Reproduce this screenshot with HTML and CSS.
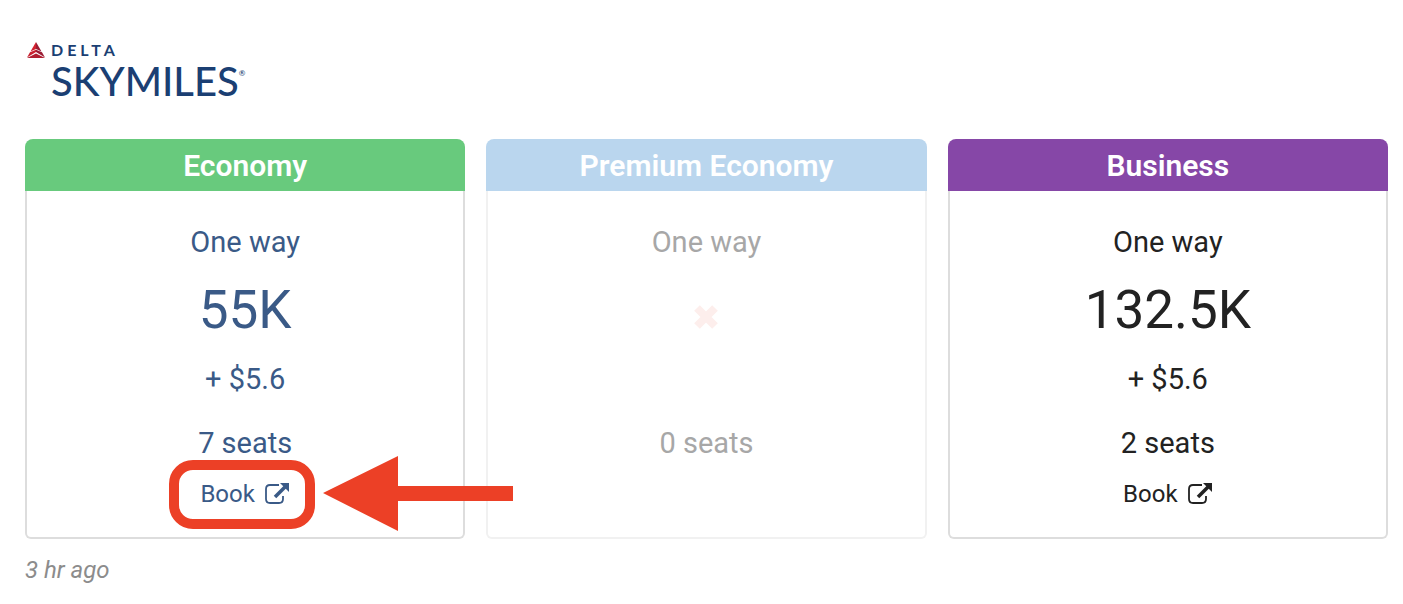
FILE: index.html
```html
<!DOCTYPE html>
<html lang="en">
<head>
<meta charset="utf-8">
<title>Delta SkyMiles awards</title>
<link rel="stylesheet" href="styles.css">
</head>
<body>
<svg class="symbols" aria-hidden="true">
  <symbol id="external" viewBox="0 0 26 24">
    <path d="M15 3H6Q2 3 2 7V17Q2 21 6 21H15Q19 21 19 17V14" fill="none" stroke="currentColor" stroke-width="1.8"/>
    <path d="M11 15L21 5" fill="none" stroke="currentColor" stroke-width="3.5"/>
    <path d="M16 1H25V10Z" fill="currentColor"/>
  </symbol>
</svg>
<main class="awards">
  <header class="logo">
    <svg class="logo-mark" viewBox="0 0 20 17" aria-hidden="true">
      <path d="M10 0L15.5 9.5L10 7Z" fill="#9b1c34"/>
      <path d="M10 0L4.500 9.500L10 7Z" fill="#d3222f"/>
      <path d="M16 10.300L10 7.700V10L19 15.500Z" fill="#9b1c34"/>
      <path d="M4 10.300L10 7.700V10L1 15.500Z" fill="#c8202f"/>
      <path d="M1 16L10 11.500L19 16Z" fill="#b01e30"/>
    </svg>
    <span class="logo-brand">DELTA</span>
    <span class="logo-program">SKYMILES<span class="logo-reg">®</span></span>
  </header>
  <div class="cabins">
    <section class="cabin economy">
      <h2 class="cabin-name">Economy</h2>
      <div class="cabin-body">
        <p class="line">One way</p>
        <p class="price">55K</p>
        <p class="line fees">+ $5.6</p>
        <p class="line seats">7 seats</p>
        <div class="booking">
          <a class="book" href="#">Book <svg class="book-icon" aria-hidden="true"><use href="#external"/></svg></a>
          <span class="ring"></span>
          <svg class="arrow" viewBox="0 0 190 75" aria-hidden="true"><path d="M0 37L75 0V30H190V45H75V75Z" fill="#ec4026"/></svg>
        </div>
      </div>
    </section>
    <section class="cabin premium">
      <h2 class="cabin-name">Premium Economy</h2>
      <div class="cabin-body">
        <p class="line">One way</p>
        <p class="price"><svg class="cross" viewBox="0 0 26 26" role="img" aria-label="Unavailable"><path d="M4 4L22 22M22 4L4 22" stroke="#fdeeec" stroke-width="8"/></svg></p>
        <p class="line fees">&nbsp;</p>
        <p class="line seats">0 seats</p>
      </div>
    </section>
    <section class="cabin business">
      <h2 class="cabin-name">Business</h2>
      <div class="cabin-body">
        <p class="line">One way</p>
        <p class="price">132.5K</p>
        <p class="line fees">+ $5.6</p>
        <p class="line seats">2 seats</p>
        <div class="booking">
          <a class="book" href="#">Book <svg class="book-icon" aria-hidden="true"><use href="#external"/></svg></a>
        </div>
      </div>
    </section>
  </div>
  <p class="updated">3 hr ago</p>
</main>
</body>
</html>
```
FILE: styles.css
```css
* {
  box-sizing: border-box;
}

body {
  margin: 0;
  background: #fff;
  color: #222;
  font-family: Roboto, "Liberation Sans", sans-serif;
}

h2,
p {
  margin: 0;
}

.symbols {
  display: none;
}

.awards {
  padding: 40px 15px 16px 25px;
}

.logo {
  display: grid;
  grid-template-columns: 20px 1fr;
  grid-template-rows: 20px 43px;
  column-gap: 5px;
  align-items: center;
  margin: 0 0 36px 1px;
  color: #1b3f73;
  font-family: Lato, "Open Sans", sans-serif;
}

.logo-mark {
  width: 20px;
  height: 17px;
}

.logo-brand {
  font-size: 16px;
  font-weight: 700;
  line-height: 20px;
  letter-spacing: 4px;
}

.logo-program {
  grid-column: 2;
  font-size: 40px;
  font-weight: 500;
  line-height: 43px;
}

.logo-reg {
  font-size: 8px;
  vertical-align: 20px;
  line-height: 8px;
}

.cabins {
  display: grid;
  grid-template-columns: repeat(3, 1fr);
  gap: 21px;
}

.cabin {
  display: flex;
  flex-direction: column;
  text-align: center;
}

.cabin-name {
  padding: 9px 8px 7px;
  border-radius: 8px 8px 0 0;
  color: #fff;
  font-size: 30px;
  font-weight: 600;
  line-height: 36px;
}

.cabin-body {
  flex: 1;
  padding: 33px 16px 28px;
  border: 2px solid #ddd;
  border-top: 0;
  border-radius: 0 0 6px 6px;
}

.economy .cabin-name {
  background: #68ca7d;
}

.economy .cabin-body {
  color: #3a5a87;
}

.premium .cabin-name {
  background: #bad6ee;
}

.premium .cabin-body {
  border-color: #f1f1f1;
  color: #a7a7a7;
}

.business .cabin-name {
  background: #8647a7;
}

.line {
  font-size: 29px;
  line-height: 36px;
}

.price {
  height: 64px;
  margin: 18px 0 19px;
  font-size: 53px;
  line-height: 64px;
}

.cross {
  display: block;
  width: 26px;
  height: 64px;
  margin: 0 auto;
  padding-top: 14px;
}

.seats {
  margin-top: 28px;
}

.booking {
  position: relative;
  width: max-content;
  margin: 18px auto 0;
}

.book {
  display: flex;
  align-items: center;
  gap: 9px;
  color: inherit;
  font-size: 24px;
  line-height: 30px;
  text-decoration: none;
}

.book-icon {
  width: 26px;
  height: 24px;
}

.ring {
  position: absolute;
  inset: -19px -25px -20px -31px;
  border: 10px solid #ec4026;
  border-radius: 24px;
  pointer-events: none;
}

.arrow {
  position: absolute;
  top: -23px;
  left: calc(100% + 33px);
  width: 190px;
  height: 75px;
  pointer-events: none;
}

.updated {
  margin-top: 16px;
  color: #8c8c8c;
  font-size: 24px;
  font-style: italic;
  line-height: 30px;
}
```
